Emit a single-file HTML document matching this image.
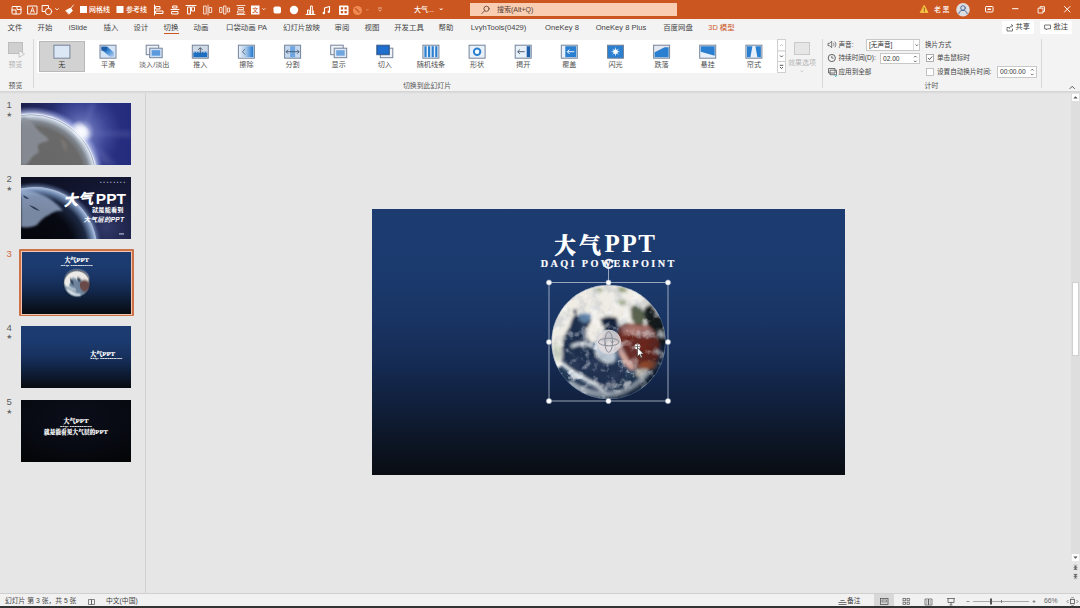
<!DOCTYPE html>
<html lang="zh-CN"><head><meta charset="utf-8"><title>大气PPT - PowerPoint</title>
<style>
*{box-sizing:border-box;margin:0;padding:0}
html,body{width:1080px;height:608px;overflow:hidden}
body{position:relative;background:#e6e6e6;font-family:"Liberation Sans","Noto Sans CJK SC",sans-serif;color:#444;font-size:7px}
.abs{position:absolute}
svg{position:absolute;overflow:visible}
#titlebar{left:0;top:0;width:1080px;height:18.5px;background:#cc561f}
#search{left:470px;top:3px;width:207px;height:13px;background:#f8cdb2;color:#5a4034;font-size:7px;line-height:13px;padding-left:27px;white-space:nowrap}
.tt{position:absolute;color:#fff;font-weight:500;font-size:7px;line-height:10px;white-space:nowrap;top:4.5px}
#tabs{left:0;top:18.5px;width:1080px;height:17.5px;background:#f3f3f3}
.tab{position:absolute;top:19.8px;height:17px;line-height:16.5px;font-size:7.4px;color:#444;white-space:nowrap;transform:translateX(-50%)}
#ribbon{left:0;top:36px;width:1080px;height:55px;background:#f3f3f3}
#gallery{left:36.5px;top:39.500px;width:741px;height:33px;background:#fff}
.gi{position:absolute;top:60.5px;font-size:7.1px;color:#505050;white-space:nowrap;transform:translateX(-50%);line-height:8px}
.rl{position:absolute;font-size:6.6px;color:#444;white-space:nowrap;line-height:8px}
.gl{position:absolute;font-size:6.9px;color:#555;white-space:nowrap;line-height:8px;transform:translateX(-50%)}
.box{position:absolute;background:#fff;border:1px solid #c8c8c8;font-size:6.6px;color:#333;line-height:9px;padding-left:2px;white-space:nowrap}
.vsep{position:absolute;width:1px;background:#d8d8d8}
#left{left:0;top:91px;width:146px;height:502px;background:#e6e6e6;border-right:1px solid #d2d2d2}
.num{position:absolute;left:6.5px;font-size:9.5px;color:#5a5a5a;line-height:10px}
.star{position:absolute;left:6.5px;font-size:5.6px;color:#6a6a6a;line-height:7px}
.thumb{position:absolute;left:21px;width:110px;height:62px;overflow:hidden}
.serif{font-family:"Liberation Serif","Noto Serif CJK SC",serif}
#status{left:0;top:593px;width:1080px;height:15px;background:#f1f1f1;border-top:1px solid #d0d0d0}
.st{position:absolute;font-size:6.8px;color:#444;white-space:nowrap;line-height:8px;top:597px}
#slide{left:372px;top:208.5px;width:473px;height:266px;overflow:hidden;background:linear-gradient(#1c3b70 0%,#1b3a6e 22%,#193565 40%,#152b53 58%,#101f3b 74%,#0c1524 88%,#0a0d12 100%)}

</style></head><body>
<div id="titlebar" class="abs"></div>
<svg id="qat" style="left:0;top:0" width="460" height="19" viewBox="0 0 460 19" fill="none" stroke="#fff" stroke-width="1" stroke-linecap="round" stroke-linejoin="round">
 <!-- save-ish -->
 <rect x="12" y="6.5" width="9" height="7.5" rx="1"/><path d="M12 10h4v4M17 6.500v3h4"/>
 <!-- text box A -->
 <rect x="28" y="6" width="9" height="8"/><path d="M30.700 12.500l1.800-5 1.800 5M31.300 11h2.400" stroke-width=".8"/>
 <!-- shapes -->
 <rect x="42.500" y="5.500" width="6" height="6"/><circle cx="48.500" cy="11.500" r="3.200" fill="#cc561f"/>
 <path d="M55.500 8.500l1.500 1.500 1.500-1.500" stroke-width=".8"/>
 <!-- brush -->
 <path d="M73.500 5l-3.500 4.500M66 10.500l4.500-2.500 2 2.800-3.500 3.200z" fill="#fff" stroke-width=".8"/>
 <!-- checkboxes -->
 <rect x="80" y="6" width="7" height="7" fill="#fff" stroke="none"/>
 <rect x="116.500" y="6" width="7" height="7" fill="#fff" stroke="none"/>
 <!-- align icons -->
 <path d="M154.500 5v10M156 6.500h4v2.500h-4zM156 11h7v2.500h-7z"/>
 <path d="M171 9.500h8M173 6h4v2h-4zM172 11.500h6v2.500h-6z"/>
 <path d="M186 5.500h10M188 7h2.500v7h-2.500zM192 7h2.500v4h-2.500z"/>
 <path d="M204 6h2.200v8h-2.200zM209.500 7.500h2.200v5h-2.200zM208 5v10" stroke-width=".8"/>
 <path d="M220 7.500h2v5h-2zM224 6h2v8h-2zM228 8h1.600v4h-1.600z" stroke-width=".8"/>
 <path d="M237 5.500h8M237 14.500h8M238.500 7.500h5v2h-5zM238 11h6v2.300h-6z" stroke-width=".8"/>
 <rect x="251" y="5.500" width="8.500" height="9" fill="#fff" stroke="none"/>
 <path d="M262.500 8.500l1.300 1.300 1.300-1.300" stroke-width=".8"/>
 <rect x="273.500" y="6.500" width="7.500" height="7" rx="1.800" fill="#fff" stroke="none"/>
 <circle cx="294" cy="10" r="4.200" fill="#fff" stroke="none"/>
 <path d="M306 14.500h9M307.500 14v-4h1.800v4M310.500 14v-8h1.800v8M313.300 14v-3"/>
 <path d="M324.500 13v-5l5-1.500v5" stroke-width="1.100"/><circle cx="323.800" cy="13" r="1.200" fill="#fff" stroke="none"/><circle cx="328.800" cy="11.700" r="1.200" fill="#fff" stroke="none"/>
 <rect x="339" y="5.500" width="9.500" height="9.500" rx="1" fill="#fff" stroke="none"/>
 <g fill="#cc561f" stroke="none"><rect x="340.800" y="7.200" width="2.300" height="2.300"/><rect x="344.500" y="7.200" width="2.300" height="2.300"/><rect x="340.800" y="11" width="2.300" height="2.300"/><rect x="344.500" y="11" width="2.300" height="2.300"/></g>
 <circle cx="357.500" cy="10.500" r="4.500" fill="#f08a55" stroke="none"/><path d="M355.500 8.500l3.500 3.500" stroke="#cc561f" stroke-width="1.300"/>
 <path d="M366.500 9.500l.8.800.8-.8" stroke="#e8a583" stroke-width=".8"/>
 <path d="M378.500 8h3M378.800 10l1.200 1.200 1.200-1.200" stroke="#f3d4c4" stroke-width=".8"/>
 <path d="M440 8.800l1.200 1.200 1.200-1.200" stroke-width=".8" fill="#fff"/>
</svg>
<div class="tt" style="left:260px;top:5px;color:#cc561f;font-size:6px;left:252.300px">文</div>
<div class="tt" style="left:89px">网格线</div>
<div class="tt" style="left:126px">参考线</div>
<div class="tt" style="left:414px;font-size:7px">大气...</div>
<div id="search" class="abs">搜索(Alt+Q)</div>
<svg style="left:470px;top:3px" width="30" height="13" viewBox="0 0 30 13" fill="none" stroke="#6a4a3a" stroke-width=".9" stroke-linecap="round"><circle cx="16.500" cy="5.800" r="2.600"/><path d="M14.600 7.800l-2.800 2.800"/></svg>
<svg style="left:900px;top:0" width="180" height="19" viewBox="0 0 180 19" fill="none" stroke="#fff" stroke-width="1" stroke-linecap="round" stroke-linejoin="round">
 <path d="M24.300 5.500l3.700 7h-7.400z" fill="#f7c948" stroke="#f7c948" stroke-width=".8"/><path d="M24.300 8v2.500M24.300 11.600v.1" stroke="#7a3a10" stroke-width=".8"/>
 <circle cx="63" cy="9.800" r="6.800" fill="#dcdde0" stroke="none"/>
 <circle cx="63" cy="8" r="2.300" stroke="#3f5f8f" stroke-width=".9"/><path d="M58.800 13.800c.5-2.600 2.200-3.500 4.200-3.500s3.700.9 4.200 3.500" stroke="#3f5f8f" stroke-width=".9"/>
 <rect x="85.500" y="6.500" width="7.500" height="5.500" rx=".8"/><path d="M88 9.200h2.500" stroke-width="1.400"/>
 <path d="M112.500 8.700h5.500"/>
 <path d="M138.500 8.200h4.500v4.800h-4.500zM140 8v-1.300h4.500v4.800h-1.300" stroke-width=".9"/>
 <path d="M164.500 6.500l5.500 5.500M170 6.500l-5.500 5.500"/>
</svg>
<div class="tt" style="left:934px;letter-spacing:1.500px">老黑</div>

<div id="tabs" class="abs"></div>
<div class="tab" style="left:15px">文件</div>
<div class="tab" style="left:45px">开始</div>
<div class="tab" style="left:78px;font-size:7.600px">iSlide</div>
<div class="tab" style="left:111px">插入</div>
<div class="tab" style="left:141px">设计</div>
<div class="tab" style="left:171px;color:#333">切换</div>
<div class="abs" style="left:164px;top:32.500px;width:15px;height:1.500px;background:#cc561f"></div>
<div class="tab" style="left:201px">动画</div>
<div class="tab" style="left:246.500px">口袋动画 PA</div>
<div class="tab" style="left:301.500px">幻灯片放映</div>
<div class="tab" style="left:342px">审阅</div>
<div class="tab" style="left:372px">视图</div>
<div class="tab" style="left:409px">开发工具</div>
<div class="tab" style="left:446px">帮助</div>
<div class="tab" style="left:498.500px;font-size:7.600px">LvyhTools(0429)</div>
<div class="tab" style="left:562px;font-size:7.600px">OneKey 8</div>
<div class="tab" style="left:621px;font-size:7.600px">OneKey 8 Plus</div>
<div class="tab" style="left:678px">百度网盘</div>
<div class="tab" style="left:721.500px;color:#cc561f">3D 模型</div>
<div class="abs" style="left:1002px;top:21px;width:32px;height:12.500px;background:#fff;border-radius:1.500px"></div>
<div class="abs" style="left:1040px;top:21px;width:32px;height:12.500px;background:#fff;border-radius:1.500px"></div>
<svg style="left:1002px;top:21px" width="70" height="13" viewBox="0 0 70 13" fill="none" stroke="#555" stroke-width=".8" stroke-linejoin="round" stroke-linecap="round">
 <path d="M7 6.500h-2v3.500h5.500v-2M7.500 7.500c.3-2 1.500-2.800 3-2.800M9.500 3.500l1.300 1.200-1.300 1.200"/>
 <path d="M43 4h5.500v3.800h-3l-1.200 1.200v-1.200h-1.300z"/>
</svg>
<div class="rl" style="left:1015.500px;top:23.300px;font-size:7.200px;color:#333">共享</div>
<div class="rl" style="left:1053.500px;top:23.300px;font-size:7.200px;color:#333">批注</div>

<div id="ribbon" class="abs"></div>
<div id="gallery" class="abs"></div>
<div class="abs" style="left:39px;top:40.500px;width:46px;height:31px;background:#d2d2d2;border:1px solid #b9b9b9"></div>
<svg style="left:0;top:0" width="1080" height="92" viewBox="0 0 1080 92">
<defs><linearGradient id="gsm" x1="0" y1="0" x2="1" y2="1"><stop offset="0" stop-color="#1f5fa8"/><stop offset=".5" stop-color="#3f8ad6"/><stop offset="1" stop-color="#b9d3f0"/></linearGradient><linearGradient id="gwp" x1="0" y1="0" x2="1" y2="0"><stop offset="0" stop-color="#e4edf7"/><stop offset=".45" stop-color="#a9c8ea"/><stop offset="1" stop-color="#1f77d0"/></linearGradient></defs>
<rect x="8.500" y="42.500" width="14" height="11" fill="#cfcfcf" stroke="#bdbdbd"/><path d="M19 50.500l5.500 3.500-5.500 3.500z" fill="#f3f3f3" stroke="#bdbdbd" stroke-width=".8"/>
<g transform="translate(0 .7)">
<rect x="53.9" y="44.500" width="16" height="13" fill="#dbe7f4" stroke="#75849a" stroke-width="1"/>
<rect x="100.0" y="44.500" width="16" height="13" fill="#d4e3f5" stroke="#75849a" stroke-width="1"/><path d="M101.5 46h6l6.500 6v4h-4l-8.500-7z" fill="url(#gsm)"/><path d="M101.5 46h5.500v4h-5.500z" fill="#1f5fa8"/>
<rect x="146.2" y="44.500" width="12.500" height="9.500" fill="#eef2f7" stroke="#75849a"/><rect x="149.7" y="47.500" width="12.500" height="9.500" fill="#cfe0f3" stroke="#75849a"/><rect x="151.7" y="49.500" width="8.500" height="5.500" fill="#5b9bdd"/>
<rect x="192.3" y="44.500" width="16" height="13" fill="#cfdae6" stroke="#75849a" stroke-width="1"/><rect x="193.3" y="51" width="14" height="5.500" fill="#1f6fc0"/><path d="M200.3 47v6M198.1 49.200l2.200-2.200 2.200 2.200" stroke="#456" fill="none" stroke-width=".9"/><path d="M193.3 51.500h14" stroke="#fff" stroke-width=".6" stroke-dasharray="1.500 1"/>
<rect x="238.4" y="44.500" width="16" height="13" fill="#e8f0fa" stroke="#75849a" stroke-width="1"/><rect x="239.4" y="45.500" width="14" height="11" fill="url(#gwp)"/><path d="M245.1 48.300l-2.700 2.700 2.700 2.700" stroke="#5a6a7a" fill="none" stroke-width="1"/>
<rect x="284.6" y="44.500" width="16" height="13" fill="#c4d9f0" stroke="#75849a" stroke-width="1"/><rect x="290.1" y="45.500" width="5" height="11" fill="#6fa6df"/><path d="M286.1 51h13M288.1 49l-2 2 2 2M297.1 49l2 2-2 2" stroke="#456" fill="none" stroke-width=".9"/>
<rect x="330.7" y="44.500" width="12.500" height="9.500" fill="#f2f4f7" stroke="#75849a"/><rect x="334.2" y="47.500" width="12.500" height="9.500" fill="#dfe8f3" stroke="#75849a"/><rect x="336.2" y="49.500" width="8.500" height="5.500" fill="#6fa6df"/>
<rect x="380.3" y="47.500" width="12.500" height="9.500" fill="#eef2f7" stroke="#75849a"/><rect x="376.8" y="44.500" width="12.500" height="9.500" fill="#1f5fa8" stroke="#3a5f8f"/><rect x="377.8" y="45.500" width="10.500" height="7.500" fill="#1e6fcf"/>
<rect x="422.9" y="44.500" width="16" height="13" fill="#e8f0fa" stroke="#75849a" stroke-width="1"/><rect x="424.4" y="45.500" width="2.200" height="11" fill="#2b7fd0"/><rect x="428.0" y="45.500" width="2.200" height="11" fill="#2b7fd0"/><rect x="431.6" y="45.500" width="2.200" height="11" fill="#2b7fd0"/><rect x="435.2" y="45.500" width="2.200" height="11" fill="#2b7fd0"/>
<rect x="469.1" y="44.500" width="16" height="13" fill="#e8f0fa" stroke="#75849a" stroke-width="1"/><circle cx="477.1" cy="51" r="3.200" fill="#fff" stroke="#2b7fd0" stroke-width="2"/>
<rect x="515.2" y="44.500" width="16" height="13" fill="#e8f0fa" stroke="#75849a" stroke-width="1"/><rect x="526.7" y="45.500" width="3.500" height="11" fill="#1f5fa8"/><path d="M517.7 51h7M519.9 48.800l-2.200 2.200 2.200 2.200" stroke="#456" fill="none" stroke-width=".9"/>
<rect x="561.3" y="44.500" width="16" height="13" fill="#e8f0fa" stroke="#75849a" stroke-width="1"/><rect x="565.3" y="45.500" width="11" height="11" fill="#2b7fd0"/><path d="M567.3 51h7M569.5 48.800l-2.200 2.200 2.200 2.200" stroke="#fff" fill="none" stroke-width=".9"/>
<rect x="607.5" y="44.500" width="16" height="13" fill="#2b7fd0" stroke="#75849a" stroke-width="1"/><circle cx="615.5" cy="51" r="2.300" fill="#fff"/><path d="M615.5 47v8M611.5 51h8M612.7 48.200l5.600 5.600M618.3 48.200l-5.600 5.600" stroke="#fff" stroke-width=".7"/>
<rect x="653.6" y="44.500" width="16" height="13" fill="#e4e8ee" stroke="#75849a" stroke-width="1"/><path d="M654.6 56.500v-5l10-5h4v10z" fill="#2b7fd0"/>
<rect x="699.7" y="44.500" width="16" height="13" fill="#e8f0fa" stroke="#75849a" stroke-width="1"/><path d="M700.7 45.500h14v9.500l-14-4z" fill="#2b7fd0"/>
<rect x="745.9" y="44.500" width="16" height="13" fill="#e8f0fa" stroke="#75849a" stroke-width="1"/><path d="M746.9 45.500h5.500l-2 11h-3.500zM760.9 45.500h-5.500l2 11h3.500z" fill="#2b7fd0"/>
</g>
<g fill="#fff" stroke="#d0d0d0" stroke-width="1"><rect x="777.500" y="39.500" width="8" height="11.500"/><rect x="777.500" y="51" width="8" height="10.500"/><rect x="777.500" y="61.500" width="8" height="11"/></g>
<path d="M780 46l1.500-1.500 1.500 1.500" fill="none" stroke="#bbb" stroke-width=".8"/><path d="M780 55.500l1.500 1.500 1.500-1.500" fill="none" stroke="#444" stroke-width=".9"/><path d="M779.700 65.300h3.600M780 67l1.500 1.500 1.500-1.500" fill="none" stroke="#444" stroke-width=".9"/>
<rect x="794.500" y="42.500" width="15" height="12" fill="#e6e6e6" stroke="#c9c9c9"/><path d="M800.500 70.500l1.300 1.300 1.300-1.300" fill="none" stroke="#bbb" stroke-width=".8"/>
<path d="M828 43.300h1.500l2.200-2v6.400l-2.200-2h-1.500z" fill="none" stroke="#555" stroke-width=".8" stroke-linejoin="round"/><path d="M833.300 42.800c.9 1 .9 2.400 0 3.400M834.800 41.600c1.500 1.700 1.500 4.100 0 5.800" fill="none" stroke="#555" stroke-width=".7"/>
<circle cx="831.800" cy="58" r="3.600" fill="none" stroke="#555" stroke-width=".9"/><path d="M831.800 55.800v2.300h1.800" fill="none" stroke="#555" stroke-width=".8"/>
<path d="M828.500 68.500h6.500v4.500h-6.500zM830 70.200h6.500v4.500h-6.500z" fill="#f3f3f3" stroke="#555" stroke-width=".8"/><path d="M834.500 75.500l1.500 1 1-1.500" stroke="#2aa" fill="none" stroke-width=".8"/>
<rect x="926.500" y="54.500" width="7" height="7" fill="#fff" stroke="#9a9a9a" stroke-width=".8"/><path d="M928 58l1.500 1.600 2.700-3.200" fill="none" stroke="#444" stroke-width=".9"/><rect x="926.500" y="68.500" width="7" height="7" fill="#fff" stroke="#b5b5b5" stroke-width=".8"/>
<path d="M1069.700 88.800l2.500-2.500 2.500 2.500" fill="none" stroke="#555" stroke-width="1"/>
</svg>
<div class="gi" style="left:61.9px;color:#333">无</div>
<div class="gi" style="left:108.0px;color:#505050">平滑</div>
<div class="gi" style="left:154.2px;color:#505050">淡入/淡出</div>
<div class="gi" style="left:200.3px;color:#505050">推入</div>
<div class="gi" style="left:246.4px;color:#505050">擦除</div>
<div class="gi" style="left:292.6px;color:#505050">分割</div>
<div class="gi" style="left:338.7px;color:#505050">显示</div>
<div class="gi" style="left:384.8px;color:#505050">切入</div>
<div class="gi" style="left:430.9px;color:#505050">随机线条</div>
<div class="gi" style="left:477.1px;color:#505050">形状</div>
<div class="gi" style="left:523.2px;color:#505050">揭开</div>
<div class="gi" style="left:569.3px;color:#505050">覆盖</div>
<div class="gi" style="left:615.5px;color:#505050">闪光</div>
<div class="gi" style="left:661.6px;color:#505050">跌落</div>
<div class="gi" style="left:707.7px;color:#505050">悬挂</div>
<div class="gi" style="left:753.9px;color:#505050">帘式</div>
<div class="gl" style="left:15.500px;top:60.500px;color:#b0b0b0">预览</div>
<div class="gl" style="left:15.500px;top:81.500px">预览</div>
<div class="gl" style="left:427px;top:81.500px">切换到此幻灯片</div>
<div class="gl" style="left:802px;top:59px;color:#b5b5b5">效果选项</div>
<div class="vsep" style="left:33px;top:39px;height:49px"></div>
<div class="vsep" style="left:822px;top:39px;height:49px"></div>
<div class="vsep" style="left:1041px;top:39px;height:49px"></div>
<div class="rl" style="left:838.500px;top:40.500px">声音:</div>
<div class="box" style="left:866px;top:39px;width:54px;height:11.500px">[无声音]</div>
<div class="abs" style="left:913px;top:39.500px;width:1px;height:10.500px;background:#ddd"></div>
<svg style="left:913px;top:39px" width="8" height="12" viewBox="0 0 8 12"><path d="M2.500 5.500l1.300 1.300 1.300-1.300" fill="none" stroke="#444" stroke-width=".8"/></svg>
<div class="rl" style="left:838.500px;top:54px">持续时间(D):</div>
<div class="box" style="left:880px;top:52.500px;width:40px;height:11.500px">02.00</div>
<svg style="left:911px;top:52.500px" width="9" height="12" viewBox="0 0 9 12"><path d="M3 4.300l1.300-1.300 1.300 1.300M3 7.700l1.300 1.300 1.300-1.300" fill="none" stroke="#444" stroke-width=".8"/></svg>
<div class="rl" style="left:838.500px;top:68px">应用到全部</div>
<div class="rl" style="left:925px;top:40.500px">换片方式</div>
<div class="rl" style="left:937px;top:54px">单击鼠标时</div>
<div class="rl" style="left:937px;top:68px">设置自动换片时间:</div>
<div class="box" style="left:997px;top:66px;width:40px;height:12px;line-height:9.500px">00:00.00</div>
<svg style="left:1028px;top:66px" width="9" height="12" viewBox="0 0 9 12"><path d="M3 4.500l1.300-1.300 1.300 1.300M3 7.800l1.300 1.300 1.300-1.300" fill="none" stroke="#444" stroke-width=".8"/></svg>
<div class="gl" style="left:931.500px;top:81.500px">计时</div>
<div id="left" class="abs"></div>
<div class="num" style="top:100px">1</div><div class="star" style="top:110.500px">★</div>
<div class="num" style="top:174px">2</div><div class="star" style="top:184.500px">★</div>
<div class="num" style="top:248.500px;color:#d0683f">3</div>
<div class="num" style="top:322.500px">4</div><div class="star" style="top:333px">★</div>
<div class="num" style="top:397px">5</div><div class="star" style="top:407.500px">★</div>

<!-- thumb 1 -->
<svg style="left:21px;top:103px;overflow:hidden" width="110" height="62" viewBox="0 0 110 62">
 <defs>
  <linearGradient id="t1bg" x1="0" y1="0" x2="1" y2="0"><stop offset="0" stop-color="#1a1f4a"/><stop offset=".5" stop-color="#2b3482"/><stop offset="1" stop-color="#252c7e"/></linearGradient>
  <radialGradient id="t1sun" cx="61" cy="29" r="40" gradientUnits="userSpaceOnUse"><stop offset="0" stop-color="#fff"/><stop offset=".1" stop-color="#e8ecff" stop-opacity=".9"/><stop offset=".32" stop-color="#8f9bdc" stop-opacity=".5"/><stop offset="1" stop-color="#5a68c8" stop-opacity="0"/></radialGradient>
  <radialGradient id="t1e" cx="10" cy="77" r="66.500" gradientUnits="userSpaceOnUse"><stop offset="0" stop-color="#666"/><stop offset=".8" stop-color="#6a6a6a"/><stop offset=".88" stop-color="#80868f"/><stop offset=".94" stop-color="#b9c4d2"/><stop offset=".98" stop-color="#eef3fc"/><stop offset="1" stop-color="#dfe8f8"/></radialGradient>
  <radialGradient id="t1halo" cx="10" cy="77" r="76" gradientUnits="userSpaceOnUse"><stop offset=".875" stop-color="#dfe6ff" stop-opacity=".8"/><stop offset=".97" stop-color="#8090e0" stop-opacity="0"/></radialGradient>
 </defs>
 <rect width="110" height="62" fill="url(#t1bg)"/>
 <rect width="110" height="62" fill="url(#t1sun)"/>
 <path d="M62 30l48-2v6zM62 30l34 32h-14zM62 30l8-30h5z" fill="#c8d0ff" opacity=".16" filter="url(#b2)"/>
 <circle cx="10" cy="77" r="76" fill="url(#t1halo)"/>
 <circle cx="10" cy="77" r="66.500" fill="url(#t1e)"/>
 <circle cx="10" cy="77" r="65.300" fill="none" stroke="#3a4a7a" stroke-width=".5" opacity=".8"/>
 <path d="M0 14c4 0 8 2 11 5 3 4 5 8 9 11 3 2 6 4 8 7-3 2-7 2-10 4-2 2-1 5 0 8-2 2-5 3-7 5-2 3-3 6-6 8h-5z" fill="#8b909a" opacity=".85" filter="url(#b3)"/>
 <path d="M40 36c3 1 5 3 6 6-1 3 0 5 1 8-3-2-5-5-6-8z" fill="#857d78" opacity=".6" filter="url(#b3)"/>
 <ellipse cx="60" cy="28.500" rx="5.500" ry="9" transform="rotate(-42 60 28.500)" fill="#fff" opacity=".9" filter="url(#b2)"/>
 <filter id="b2"><feGaussianBlur stdDeviation="2.500"/></filter>
</svg>

<!-- thumb 2 -->
<svg style="left:21px;top:177px;overflow:hidden" width="110" height="62" viewBox="0 0 110 62">
 <defs>
  <linearGradient id="t2bg" x1="0" y1="0" x2="1" y2="1"><stop offset="0" stop-color="#0c0f20"/><stop offset=".6" stop-color="#161a38"/><stop offset="1" stop-color="#1c2248"/></linearGradient>
  <radialGradient id="t2e" cx="14" cy="72" r="62" gradientUnits="userSpaceOnUse"><stop offset="0" stop-color="#04050a"/><stop offset=".62" stop-color="#070912"/><stop offset=".84" stop-color="#1c2842"/><stop offset=".94" stop-color="#6f88b0"/><stop offset="1" stop-color="#b4c6e4"/></radialGradient>
  <radialGradient id="t2h" cx="14" cy="72" r="70" gradientUnits="userSpaceOnUse"><stop offset=".88" stop-color="#a8c0e8" stop-opacity=".6"/><stop offset=".96" stop-color="#5070b0" stop-opacity="0"/></radialGradient>
  <radialGradient id="t2g" cx="85" cy="50" r="40" gradientUnits="userSpaceOnUse"><stop offset="0" stop-color="#4a5490" stop-opacity=".55"/><stop offset="1" stop-color="#20264e" stop-opacity="0"/></radialGradient>
 </defs>
 <rect width="110" height="62" fill="url(#t2bg)"/>
 <rect width="110" height="62" fill="url(#t2g)"/>
 <circle cx="14" cy="72" r="70" fill="url(#t2h)"/>
 <circle cx="14" cy="72" r="62" fill="url(#t2e)"/>
 <path d="M0 13c8 0 16 2 24 6 8 4 14 10 18 15-6-1-10 1-14 4-5 2-9 6-12 10-4 2-10 3-16 2z" fill="#9fb3d3" opacity=".75" filter="url(#b3)"/>
 <path d="M2 18c3 1 5 3 6 4-3 0-5-1-6-4zM8 28c4 1 8 3 11 6-5-1-8-3-11-6z" fill="#1a2440" opacity=".8"/>
 <g fill="#fff" font-family="'Liberation Sans','Noto Sans CJK SC',sans-serif">
  <text x="42" y="28" font-size="15" font-weight="900" font-style="italic" transform="rotate(-5 57 22)">大气</text>
  <text x="74.800" y="26.800" font-size="15.500" font-weight="700">PPT</text>
  <text x="71" y="35.300" font-size="6.200" font-weight="700" textLength="31.500">就是能看到</text>
  <text x="62.500" y="44.600" font-size="6.600" font-weight="700" font-style="italic" textLength="40.500">大气层的PPT</text>
  <text x="79" y="5.800" font-size="2.600" textLength="25" fill="#cfd4e8">● ● ● ● ● ● ● ●</text>
 </g>
 <rect x="98" y="56" width="5" height="1.800" fill="#aab0d0" opacity=".7"/>
</svg>

<!-- thumb 3 selected -->
<div class="abs" style="left:19px;top:249px;width:114.500px;height:67px;background:#cd7148;border-radius:1px"></div>
<div class="abs" style="left:20.500px;top:250.500px;width:111.500px;height:64px;background:#f1c6b0"></div>
<svg style="left:21.500px;top:251.500px;overflow:hidden" width="109.500" height="62" viewBox="0 0 110 62" preserveAspectRatio="none">
 <defs><linearGradient id="t3bg" x1="0" y1="0" x2="0" y2="1"><stop offset="0" stop-color="#1c3b70"/><stop offset=".25" stop-color="#1b3a6e"/><stop offset=".45" stop-color="#183362"/><stop offset=".62" stop-color="#13284d"/><stop offset=".8" stop-color="#0d1a30"/><stop offset="1" stop-color="#080b10"/></linearGradient>
 <radialGradient id="t3g" cx=".4" cy=".4" r=".65"><stop offset="0" stop-color="#e8eef4"/><stop offset=".6" stop-color="#9fb2c4"/><stop offset="1" stop-color="#2a3c50"/></radialGradient></defs>
 <rect width="110" height="62" fill="url(#t3bg)"/>
 <circle cx="55" cy="31.700" r="13.200" fill="#6d849c"/>
 <g filter="url(#b3)"><path d="M42 31c0-8 6-13 13-13s12 4 13 9c-2 3-5 1-7 2-2-3-4-2-5 0-2-3-5-4-7-2 0 3-1 6-3 8-2 0-3-2-4-4z" fill="#eceae6"/>
 <path d="M61 28c3-1 6 1 7 4 0 4-2 7-5 8-3-1-5-4-5-7 0-2 1-4 3-5z" fill="#6a4a48"/>
 <path d="M45 37c3 4 8 7 14 6-5 0-9-3-14-6zM44 31c2 4 6 6 10 7" stroke="#eef2f5" stroke-width="1.400" fill="none"/>
 <path d="M48 26c2 1 4 4 4 7-2-1-4-4-4-7zM55 26c2-1 4 0 4 2-1 2-3 2-4-2z" fill="#22344f"/></g>
 <filter id="b3"><feGaussianBlur stdDeviation=".8"/></filter>
 <circle cx="55" cy="31.700" r="13.200" fill="none" stroke="#0a1424" stroke-opacity=".4" stroke-width="1.500"/>
 <g fill="#fff" class="serif" font-family="'Liberation Serif','Noto Serif CJK SC',serif" text-anchor="middle">
  <text x="55" y="10.300" font-size="6" font-weight="900" stroke="#fff" stroke-width=".15">大气<tspan font-size="6.800" font-weight="700">PPT</tspan></text>
  <text x="55" y="14.300" font-size="2.500" font-weight="700" textLength="31.500" stroke="#fff" stroke-width=".2">DAQI POWERPOINT</text>
 </g>
</svg>

<!-- thumb 4 -->
<svg style="left:21px;top:326px;overflow:hidden" width="110" height="62" viewBox="0 0 110 62">
 <rect width="110" height="62" fill="url(#t3bg)"/>
 <g fill="#fff" font-family="'Liberation Serif','Noto Serif CJK SC',serif">
  <text x="69.300" y="29.600" font-size="6" font-weight="900" stroke="#fff" stroke-width=".15">大气<tspan font-size="6.800" font-weight="700">PPT</tspan></text>
  <text x="69.500" y="33.300" font-size="2.500" font-weight="700" textLength="31.500" stroke="#fff" stroke-width=".2">DAQI POWERPOINT</text>
 </g>
</svg>

<!-- thumb 5 -->
<svg style="left:21px;top:400px;overflow:hidden" width="110" height="62" viewBox="0 0 110 62">
 <defs><radialGradient id="t5bg" cx=".5" cy=".3" r=".8"><stop offset="0" stop-color="#0b0e1a"/><stop offset=".6" stop-color="#080a12"/><stop offset="1" stop-color="#040507"/></radialGradient></defs>
 <rect width="110" height="62" fill="url(#t5bg)"/>
 <g fill="#fff" font-family="'Liberation Serif','Noto Serif CJK SC',serif" text-anchor="middle">
  <text x="55" y="23" font-size="6" font-weight="900" stroke="#fff" stroke-width=".15">大气<tspan font-size="6.800" font-weight="700">PPT</tspan></text>
  <text x="55" y="26.600" font-size="2.500" font-weight="700" textLength="31.500" stroke="#fff" stroke-width=".2">DAQI POWERPOINT</text>
  <text x="55" y="33.600" font-size="5.600" font-weight="900" textLength="64" stroke="#fff" stroke-width=".12">就是能看见大气层的<tspan font-size="6.600" font-weight="700">PPT</tspan></text>
 </g>
</svg>

<div class="abs" style="left:0;top:91px;width:1080px;height:3px;background:linear-gradient(#d2d2d2,#e6e6e6);z-index:2"></div>
<!-- right scrollbar -->
<div class="abs" style="left:1070.500px;top:92px;width:9.500px;height:462px;background:#dedede"></div>
<div class="abs" style="left:1072px;top:94px;width:7px;height:7px;background:#fff"></div>
<div class="abs" style="left:1071.500px;top:282px;width:7.500px;height:74px;background:#fff;border:1px solid #d0d0d0"></div>
<div class="abs" style="left:1072px;top:554px;width:7px;height:7px;background:#fff"></div>
<svg style="left:1068px;top:92px" width="12" height="500" viewBox="0 0 12 500" fill="#555">
 <path d="M7.500 4.300l2.200 2.200h-4.400z"/><path d="M7.500 466.800l2.200-2.200h-4.400z"/>
 <path d="M5.700 473.200h3.600M7.500 473.800l1.700 1.700h-3.400zM7.500 475.800l1.700 1.700h-3.400z" stroke="#555" stroke-width=".4"/>
 <path d="M5.700 486.600h3.600M7.500 486l1.700-1.700h-3.400zM7.500 484l1.700-1.700h-3.400z" stroke="#555" stroke-width=".4"/>
</svg>

<div id="slide" class="abs"></div>
<svg style="left:372px;top:208px" width="473" height="267" viewBox="372 208 473 267">
 <defs>
  <clipPath id="gc"><circle cx="608.500" cy="342" r="57"/></clipPath>
  <radialGradient id="ocean" cx="600" cy="350" r="60" gradientUnits="userSpaceOnUse"><stop offset="0" stop-color="#36537a"/><stop offset=".6" stop-color="#27405f"/><stop offset="1" stop-color="#182a44"/></radialGradient>
  <radialGradient id="shade" cx="592" cy="326" r="80" gradientUnits="userSpaceOnUse"><stop offset="0" stop-color="#000" stop-opacity="0"/><stop offset=".7" stop-color="#000" stop-opacity="0"/><stop offset=".88" stop-color="#000814" stop-opacity=".2"/><stop offset="1" stop-color="#000814" stop-opacity=".55"/></radialGradient>
  <filter id="bl1" x="-20%" y="-20%" width="140%" height="140%"><feGaussianBlur stdDeviation="1.700"/></filter>
  <filter id="bl2" x="-20%" y="-20%" width="140%" height="140%"><feGaussianBlur stdDeviation="1"/></filter>
  <filter id="cloud" x="0" y="0" width="100%" height="100%">
   <feTurbulence type="fractalNoise" baseFrequency="0.1" numOctaves="4" seed="11" result="n"/>
   <feColorMatrix in="n" type="matrix" values="0 0 0 0 .95  0 0 0 0 .97  0 0 0 0 1  4.200 2 0 0 -3.150"/>
  </filter>
  <filter id="cloud2" x="0" y="0" width="100%" height="100%">
   <feTurbulence type="fractalNoise" baseFrequency="0.07" numOctaves="4" seed="23" result="n"/>
   <feColorMatrix in="n" type="matrix" values="0 0 0 0 .07  0 0 0 0 .11  0 0 0 0 .2  0 4 1.500 0 -2.550"/>
  </filter>
 </defs>
 <g clip-path="url(#gc)">
  <circle cx="608.500" cy="342" r="57" fill="url(#ocean)"/>
  <rect x="551" y="285" width="115" height="115" filter="url(#cloud2)" opacity=".6"/>
  <rect x="551" y="285" width="115" height="115" filter="url(#cloud)" opacity=".6"/>
  <g filter="url(#bl1)" transform="translate(608.500 342)">
   <polygon points="-60.0,30.0 -47.0,24.0 -45.0,4.0 -14.0,1.0 -6.3,-2.8 -3.3,-12.6 -7.2,-20.5 8.5,-23.5 10.5,-14.6 15.4,-12.6 24.3,-17.6 38.1,-14.6 46.0,-20.5 50.0,-26.0 62.0,-30.0 62.0,-60.0 -60.0,-60.0" fill="#efece5"/>
   <polygon points="-46.6,4.4 -27.2,3.3 -10.5,10.0 6.2,17.8 17.3,28.9 16.2,40.0 1.7,46.7 -13.8,42.2 -31.6,33.3 -43.8,24.4" fill="#1c304e" opacity=".85"/>
   <polygon points="-38.3,36.7 -23.8,41.1 -10.5,47.8 -4.9,53.3 -18.3,52.2 -31.6,46.7" fill="#2a415f" opacity=".8"/>
   <polygon points="-34.4,-26.7 -23.8,-28.3 -16.9,-26.7 -17.4,-21.1 -21.6,-13.3 -21.6,-4.4 -16.1,2.2 -13.8,15.6 -43.8,15.6 -46.1,2.2 -43.8,-6.7 -38.8,-15.6 -36.6,-22.2" fill="#1b2e4c"/>
   <polygon points="-8.3,-23.3 -0.5,-25.6 8.4,-24.4 8.9,-15.6 3.9,-10.6 -3.8,-12.2" fill="#15233b"/>
   <polygon points="-35.5,-32.8 -31.4,-32.2 -31.8,-27.8 -34.9,-28.3" fill="#2a3a52"/>
   <polygon points="-56.1,0.0 -48.3,0.0 -47.2,13.3 -50.5,22.2 -54.9,13.3" fill="#c9d2c0" opacity=".85"/>
   <polygon points="36.2,-34.4 42.8,-37.8 50.6,-26.7 56.2,-12.2 57.3,2.2 51.7,2.2 46.2,-7.8 39.5,-15.6 35.1,-26.7" fill="#161d1b"/>
   <polygon points="22.3,-34.4 28.4,-37.8 35.1,-31.1 36.7,-23.3 33.9,-16.1 27.3,-16.7 22.8,-23.3" fill="#3f4b34" opacity=".85"/>
   <polygon points="-16.1,-53.3 -7.2,-53.9 -6.1,-50.0 -13.8,-49.4" fill="#8a9a6c" opacity=".8"/>
   <polygon points="9.5,-55.0 17.3,-54.4 18.4,-49.4 10.6,-50.0" fill="#7f9060" opacity=".8"/>
   <polygon points="7.3,-42.2 17.3,-41.7 17.3,-37.2 8.4,-37.8" fill="#8f9c74" opacity=".7"/>
   <polygon points="10.6,-15.6 17.3,-18.9 28.4,-17.8 39.5,-16.7 46.2,-10.0 50.6,0.0 51.7,13.3 46.2,23.3 37.3,27.8 28.4,27.8 21.7,28.9 15.1,22.2 9.5,11.1 7.3,0.0 9.5,-8.9" fill="#6a261e"/>
   <polygon points="12.8,-15.0 19.5,-17.2 39.5,-16.1 46.2,-10.0 39.5,-4.4 23.9,-7.8 15.1,-6.7" fill="#b98a80" opacity=".75"/>
   <polygon points="7.3,0.0 9.5,11.1 16.2,23.3 23.9,29.4 27.3,25.6 19.5,16.7 13.9,6.7 12.8,0.0" fill="#dcb4aa" opacity=".9"/>
   <polygon points="31.7,21.1 39.5,18.9 48.9,21.1 46.2,26.7 37.3,29.1 30.6,26.7" fill="#a5512e"/>
   <polygon points="27.3,27.2 39.5,26.7 40.6,33.3 32.8,37.2 26.2,33.3" fill="#e6dccb" opacity=".9"/>
   <path d="M-46 22C-40 28-33 32-22 38-14 42-8 46 0 53" fill="none" stroke="#eef2f5" stroke-width="3.200" stroke-linecap="round"/>
   <path d="M-38 42C-24 52-4 55 14 50 24 46 32 40 38 32" fill="none" stroke="#c9d3dc" stroke-width="6" stroke-linecap="round" opacity=".85"/>
   <path d="M-36 4c6-3 14-3 20 0" fill="none" stroke="#e3eaf0" stroke-width="3.500" stroke-linecap="round" opacity=".9"/>
   <path d="M-12 2c6-2 14 0 18 6 3 5 2 10-2 13-8 1-14-3-17-9-1-4-1-8 1-10z" fill="#dfe7ee" opacity=".8"/>
   <path d="M-30-27c4-3 10-3 13 0 1 4-2 6-6 8-5 0-7-4-7-8z" fill="#7fa6d0" opacity=".7"/>
   <path d="M50-12c2 0 5 3 5 8-3 0-5-3-5-8zM46 8c3-1 6 1 7 4-3 1-6 0-7-4z" fill="#e4e8ea" opacity=".85"/>
  </g>
  <rect x="551" y="285" width="115" height="115" filter="url(#cloud)" opacity=".38"/>
  <rect x="551" y="285" width="115" height="115" filter="url(#cloud2)" opacity=".14"/>
  <circle cx="608.500" cy="342" r="57" fill="url(#shade)"/>
 </g>
 <circle cx="608.500" cy="342" r="57" fill="none" stroke="#6f8aa8" stroke-width=".8" opacity=".5"/>

 <!-- title text -->
 <g fill="#fff" font-weight="700">
  <text x="554.500" y="252.900" font-size="21.300" font-weight="900" stroke="#fff" stroke-width=".55" stroke-linejoin="round" font-family="'Liberation Serif','Noto Serif CJK SC',serif" textLength="46" lengthAdjust="spacing">大气</text>
  <text x="604.500" y="252.200" font-size="25" font-family="'Liberation Serif','Noto Serif CJK SC',serif" textLength="50.500" lengthAdjust="spacing">PPT</text>
  <text x="540.700" y="267.400" font-size="10.200" font-family="'Liberation Serif','Noto Serif CJK SC',serif" textLength="133.500" lengthAdjust="spacing" fill="#fff" stroke="#fff" stroke-width=".15">DAQI POWERPOINT</text>
 </g>

 <!-- selection box -->
 <g fill="none" stroke="#b8c2d2" stroke-width=".8">
  <rect x="549" y="282.500" width="119" height="118.500"/>
  <path d="M608.500 268v14.500"/>
 </g>
 <g fill="#fff" stroke="#9aa6b8" stroke-width=".6">
  <circle cx="549" cy="282.500" r="2.600"/><circle cx="608.500" cy="282.500" r="2.600"/><circle cx="668" cy="282.500" r="2.600"/>
  <circle cx="549" cy="342" r="2.600"/><circle cx="668" cy="342" r="2.600"/>
  <circle cx="549" cy="401" r="2.600"/><circle cx="608.500" cy="401" r="2.600"/><circle cx="668" cy="401" r="2.600"/>
 </g>
 <!-- rotate handle -->
 <g transform="translate(0 .8)"><path d="M612 260.600a4.100 4.100 0 1 0 .6 3.800" fill="none" stroke="#eef1f5" stroke-width="1.900"/>
 <path d="M609.800 258l4.200 1.800-1.800 3.400z" fill="#eef1f5"/></g>
 <!-- 3D rotate control -->
 <circle cx="608.700" cy="342" r="12" fill="#e6dede" fill-opacity=".82" stroke="#cfd4da" stroke-width=".8"/>
 <g fill="none" stroke="#8a8f98" stroke-width="1">
  <ellipse cx="608.700" cy="342" rx="3.800" ry="10.300"/>
  <ellipse cx="608.700" cy="342" rx="10.300" ry="3.800"/>
  <path d="M610.500 340.500l1.500 2.500 2.300-1.800M607.500 345.800l-2.700-.6 1-2.500"/>
 </g>
 <!-- cursor -->
 <g stroke="#fff" stroke-width="1.400" fill="none"><path d="M637.500 343.500v6M634.500 346.500h6M635.400 344.400l4.200 4.200M639.600 344.400l-4.200 4.200"/></g>
 <g stroke="#444" stroke-width=".6" fill="none"><path d="M637.500 343.500v6M634.500 346.500h6"/></g>
 <path d="M637.500 347.500v9l2-2 1.500 3.300 1.300-.6-1.500-3.200h2.700z" fill="#fff" stroke="#333" stroke-width=".6"/>
</svg>

<div id="status" class="abs"></div>
<div class="st" style="left:5px">幻灯片 第 3 张，共 5 张</div>
<div class="st" style="left:106px">中文(中国)</div>
<div class="abs" style="left:874px;top:594px;width:20px;height:13px;background:#d8d8d8"></div>
<svg style="left:0;top:593.500px" width="1080" height="14" viewBox="0 0 1080 14" fill="none" stroke="#555" stroke-width=".8">
 <path d="M88.500 5.500h3v5h-3zM91.500 5.500h3v5h-3z" stroke-width=".7"/>
 <path d="M838.500 10.500h8M838.500 8.500h8M840.500 6.500h4" stroke-width=".8"/>
 <rect x="880.500" y="4.500" width="7.500" height="6"/><rect x="882" y="6" width="4.500" height="2" stroke-width=".6"/>
 <g stroke-width=".7"><rect x="903" y="4.500" width="2.600" height="2.300"/><rect x="907" y="4.500" width="2.600" height="2.300"/><rect x="903" y="8.200" width="2.600" height="2.300"/><rect x="907" y="8.200" width="2.600" height="2.300"/></g>
 <path d="M925 5h3.500v6h-3.500zM928.500 5h3.500v6h-3.500zM926 7h1.500M929.500 7h1.500M926 9h1.500M929.500 9h1.500" stroke-width=".7"/>
 <path d="M947 4.500h8M948 4.500v4h6v-4M951 8.500v2.500M949.500 11h3" stroke-width=".8"/>
 <path d="M966.500 7.500h3" stroke="#777"/>
 <path d="M973 7.500h56" stroke="#888" stroke-width=".7"/>
 <rect x="990" y="4.500" width="2" height="6" fill="#555" stroke="none"/>
 <path d="M1001.500 6v3" stroke="#666"/>
 <path d="M1032.500 7.500h3M1034 6v3" stroke="#777"/>
 <path d="M1071 4.500l1.500-1.500 1.500 1.500M1071 10.500l1.500 1.500 1.500-1.500M1068.500 6l-1.500 1.500 1.500 1.500M1076.500 6l1.500 1.500-1.500 1.500" stroke-width=".7"/><rect x="1070.500" y="5.500" width="4" height="4" stroke-width=".8"/>
</svg>
<div class="st" style="left:847px">备注</div>
<div class="st" style="left:1044px;color:#666">66%</div>

<div class="abs" id="botline" style="left:0;top:606.200px;width:1080px;height:1.800px;background:#333"></div>

</body></html>
